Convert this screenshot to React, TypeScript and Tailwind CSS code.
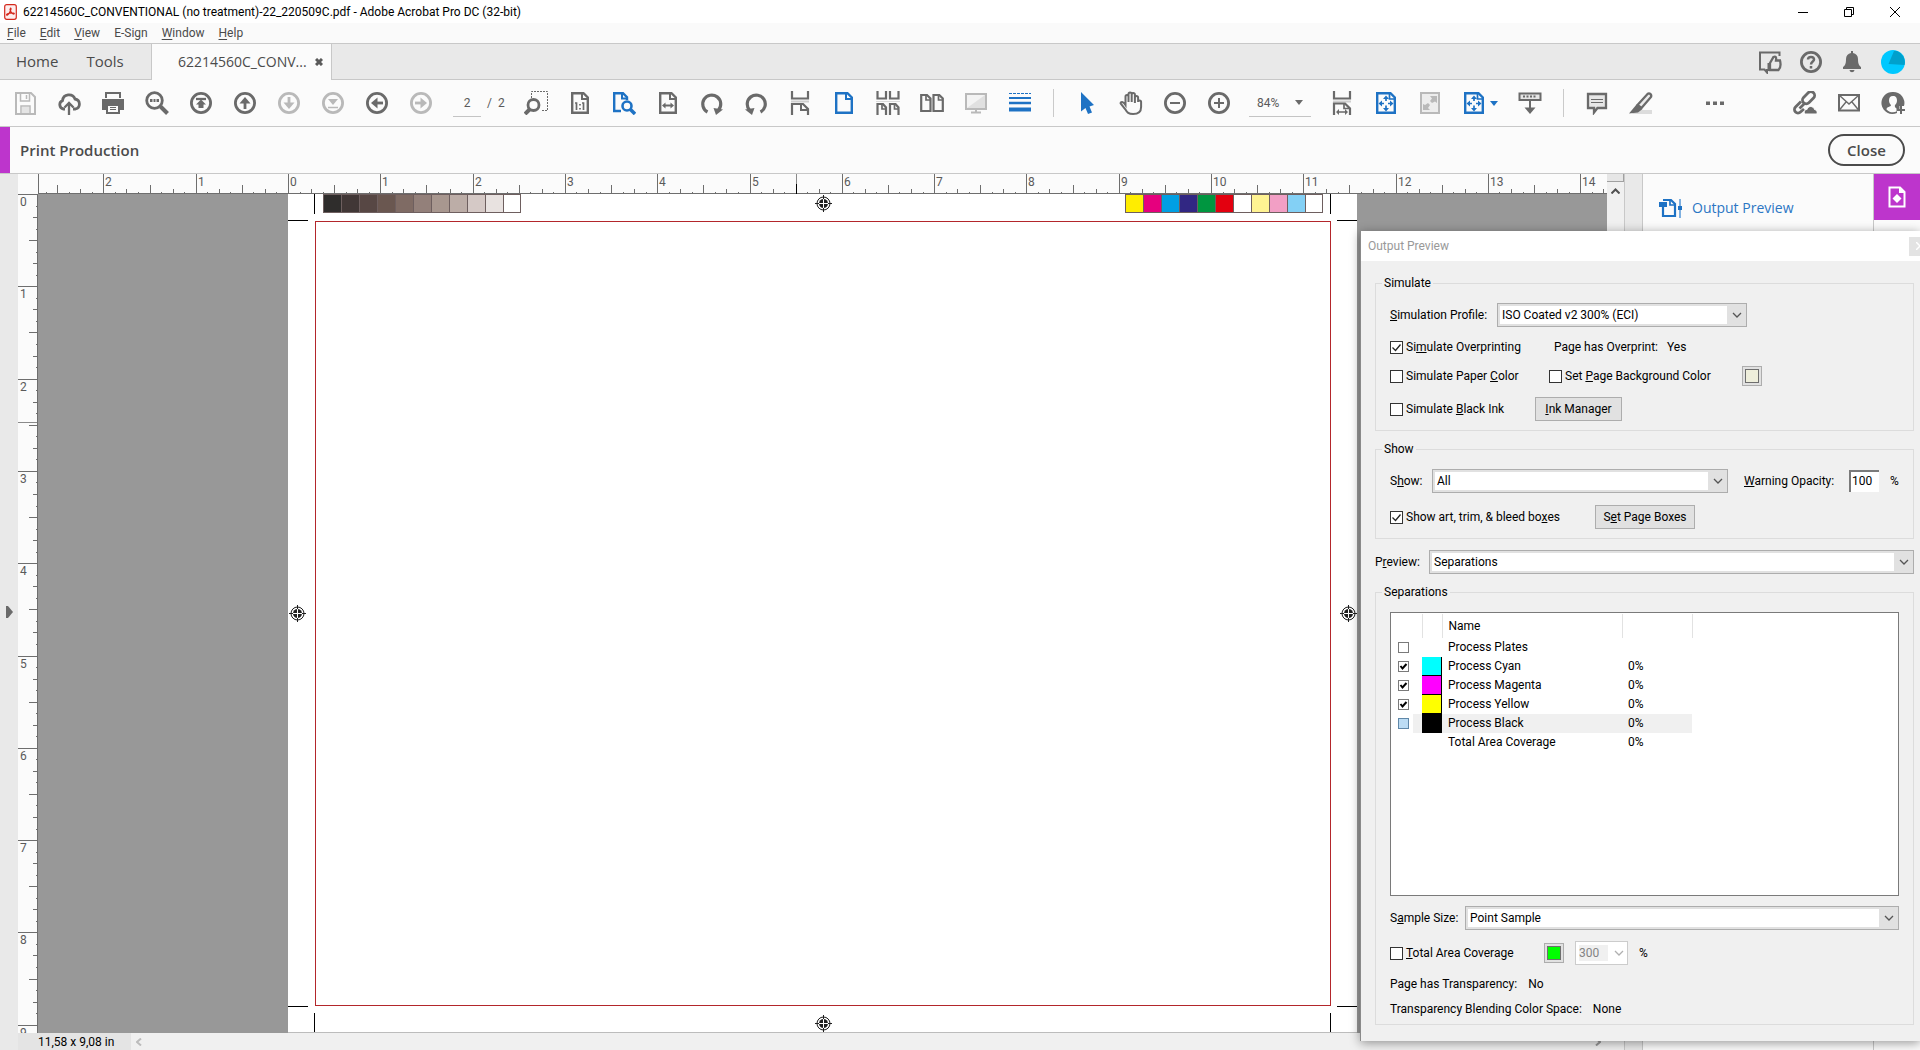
import React from "react";

const GRAY = "#6a6a6a";
const LIGHT = "#b9b9b9";
const BLUE = "#1e72c4";

type IconProps = { color?: string; children: React.ReactNode };

function Icon({ color = GRAY, children }: IconProps) {
  return (
    <svg
      width="24"
      height="24"
      viewBox="0 0 24 24"
      fill="none"
      stroke={color}
      strokeWidth="2"
      className="shrink-0"
      aria-hidden="true"
    >
      {children}
    </svg>
  );
}

const SaveIcon = () => (
  <Icon color={LIGHT}>
    <path d="M3 2h15l4 4v17H3z" />
    <path d="M7.500 3v7h9V3M13.500 4v4M8 22v-7h9v7" strokeWidth="1.500" />
    <path d="M9 16h7v6H9z" fill="#e4e4e4" stroke="none" />
  </Icon>
);

const CloudUpIcon = () => (
  <Icon>
    <path
      d="M8 18H6.500a4.400 4.400 0 0 1-1-8.400A6.500 6.500 0 0 1 18 8a5.100 5.100 0 0 1 .5 10H16"
      strokeWidth="2.800"
    />
    <path d="M12 24V12M7.500 16.500 12 12l4.500 4.500" strokeWidth="2.300" />
  </Icon>
);

const PrintIcon = () => (
  <Icon>
    <path d="M4 1h16v6H4z" fill={GRAY} stroke="none" />
    <path d="M6 3h12v4H6z" fill="#fbfbfb" stroke="none" />
    <path d="M1 8h22v11h-4v-4H5v4H1z" fill={GRAY} stroke="none" />
    <path d="M6 14h12v8H6z" fill="#fbfbfb" />
    <path d="M9 16.500h6M9 18.500h6" strokeWidth="1" />
  </Icon>
);

const SearchIcon = () => (
  <Icon>
    <circle cx="9.500" cy="9.500" r="7.800" strokeWidth="2.800" />
    <path d="m15.500 15.500 7 7" strokeWidth="4" />
    <path d="M5 9.500h2.500M8.500 9.500h2M11.500 9.500H14" strokeWidth="3" />
  </Icon>
);

function CircleIcon({ color = GRAY, children }: IconProps) {
  return (
    <Icon color={color}>
      <circle cx="12" cy="12" r="9.600" strokeWidth="2.800" />
      {children}
    </Icon>
  );
}

const FirstPageIcon = () => (
  <CircleIcon>
    <path d="M7 8h10" strokeWidth="2.300" />
    <path d="m12 8.500 5 5h-2.500V17h-5v-3.500H7z" fill={GRAY} stroke="none" />
  </CircleIcon>
);

const LastPageIcon = () => (
  <CircleIcon color={LIGHT}>
    <path d="M7 16.500h10" strokeWidth="1.500" />
    <path d="m12 14 5-6H7z" fill={LIGHT} stroke="none" />
  </CircleIcon>
);

const arrowTurns = {
  up: "",
  right: "rotate(90 12 12)",
  down: "rotate(180 12 12)",
  left: "rotate(270 12 12)",
};

function ArrowIcon({ to, color = GRAY }: { to: keyof typeof arrowTurns; color?: string }) {
  return (
    <CircleIcon color={color}>
      <g transform={arrowTurns[to]}>
        <path d="M12 18V9" strokeWidth="2.800" />
        <path d="m12 6 5.500 6.500h-11z" fill={color} stroke="none" />
      </g>
    </CircleIcon>
  );
}

const MarqueeZoomIcon = () => (
  <Icon>
    <path d="M7.500 7V.5h16v19H17" strokeWidth="1" strokeDasharray="2 1" />
    <circle cx="9.500" cy="14" r="5.500" strokeWidth="2.800" />
    <path d="m6 18-5 5" strokeWidth="4" />
  </Icon>
);

function PageIcon({ color = GRAY, children }: { color?: string; children?: React.ReactNode }) {
  return (
    <Icon color={color}>
      <path d="M4.200 2.200h11.300L19.800 6.500v15.300H4.200z" strokeWidth="2.400" />
      <path d="M14 2v6h6" />
      {children}
    </Icon>
  );
}

const ActualSizeIcon = () => (
  <PageIcon>
    <path d="M7 12h1.500v7M14 12h1.500v7M12 13v1.500M12 17v1.500" strokeWidth="1.700" />
  </PageIcon>
);

const PageSearchIcon = () => (
  <Icon color={BLUE}>
    <path d="M9 20H2.200V2.200H11l4 4V9" strokeWidth="2.400" />
    <path d="M10 2v5.500h5" />
    <circle cx="15" cy="15" r="4.500" strokeWidth="2.600" />
    <path d="m18.500 18.500 4.500 4.500" strokeWidth="3.500" />
  </Icon>
);

const FitWidthIcon = () => (
  <PageIcon>
    <path d="M8 14.500h8" />
    <path d="m6 14.500 3.500-3v6zM18 14.500l-3.500-3v6z" fill={GRAY} stroke="none" />
  </PageIcon>
);

function RotateIcon({ flip = false }: { flip?: boolean }) {
  return (
    <Icon>
      <g transform={flip ? "translate(24 0) scale(-1 1)" : undefined}>
        <path d="M7.500 21a9 9 0 1 1 11-2" strokeWidth="3.200" />
        <path d="M13.500 17 23 18.500 16 24z" fill={GRAY} stroke="none" />
      </g>
    </Icon>
  );
}

const ScrollPageIcon = () => (
  <Icon>
    <path d="M4 0v7.500h16V0" strokeWidth="2.200" />
    <path d="M3 10.500h18" stroke="#cfcfcf" />
    <path d="M4 24V13h11l5 5v6" strokeWidth="2.200" />
    <path d="M13 13v6h7" />
  </Icon>
);

const FitScrollIcon = () => (
  <Icon>
    <path d="M4 0v7.500h16V0" strokeWidth="2.200" />
    <path d="M3 10.500h18" stroke="#cfcfcf" />
    <path d="M4 24V12.500h11l5 5V24" strokeWidth="2.200" />
    <path d="M14 12.500v5h6M8 21h8" strokeWidth="1.700" />
    <path d="m6 21 3-3v6zM18 21l-3-3v6z" fill={GRAY} stroke="none" />
  </Icon>
);

const FourUpIcon = () => (
  <Icon>
    <path d="M1.500 0v7.500h8.500V0M14 0v7.500h8.500V0" strokeWidth="2.200" />
    <path d="M0 10.500h24" stroke="#dadada" strokeWidth="1" />
    <path d="M1.500 24V13H7l3 3.500V24M14 24V13h5.500l3 3.500V24" strokeWidth="2.200" />
    <path d="M6 13v5h4M18.500 13v5h4" strokeWidth="1.700" />
  </Icon>
);

const TwoUpIcon = () => (
  <Icon>
    <path d="M1.200 4H7l3.500 3.500V20H1.200zM13.500 4h5.800l3.500 3.500V20h-9.300z" strokeWidth="2.200" />
    <path d="M6 4v5h4.500M18.500 4v5h4" strokeWidth="1.700" />
  </Icon>
);

const MonitorIcon = () => (
  <Icon color={LIGHT}>
    <path d="M2 3h20v15H2z" fill="#f3f3f3" />
    <path d="M3 17 21 4v13z" fill="#e0e0e0" stroke="none" />
    <path d="M12 18v3M7 21.500h10" />
  </Icon>
);

const LinesIcon = () => (
  <Icon color={BLUE}>
    <path d="M1 2.500h22" strokeWidth="1" strokeDasharray="3 1" />
    <path d="M1 7h22" />
    <path d="M1 12h22" strokeWidth="2.500" />
    <path d="M1 18.500h22" strokeWidth="4" />
  </Icon>
);

const CursorIcon = () => (
  <Icon color={BLUE}>
    <path
      d="M6 1v19.500l4.500-3.500 2.500 6 4-1.500-2.500-6 4.500-1.500z"
      fill={BLUE}
      stroke="none"
    />
  </Icon>
);

const HandIcon = () => (
  <Icon>
    <path
      d="M6.500 14V5.500a1.500 1.500 0 0 1 3 0V11 3a1.500 1.500 0 0 1 3.200 0v8V3.500a1.500 1.500 0 0 1 3.200 0V12 6.500a1.500 1.500 0 0 1 3.200 0V11a1.500 1.500 0 0 1 3 0v5c0 4.500-3 7-8 7-4.500 0-6-1.500-8-5l-4.500-5.500c0-2 2.500-2.500 4.900 1.500z"
      strokeWidth="2"
    />
  </Icon>
);

const MinusIcon = () => (
  <CircleIcon>
    <path d="M7 12h10" />
  </CircleIcon>
);

const PlusIcon = () => (
  <CircleIcon>
    <path d="M7 12h10M12 7v10" />
  </CircleIcon>
);

const FitPageIcon = () => (
  <Icon color={BLUE}>
    <path d="M3.200 2.200h13.300l4.300 4.300v15.300H3.200z" strokeWidth="2.400" />
    <path d="M15.500 2v6H21" strokeWidth="1.700" />
    <path d="M12 7v3M12 14.500v4M6.500 12.500H10M14 12.500h3.500" strokeWidth="1.700" />
    <path
      d="m12 4.500 3 3.500H9zM12 20.500l3-3.500H9zM4.500 12.500 8 9.500v6zM19.500 12.500l-3.500-3v6z"
      fill={BLUE}
      stroke="none"
    />
  </Icon>
);

const FullScreenIcon = () => (
  <Icon color={LIGHT}>
    <path d="M3 2h18v20H3z" fill="#ededed" />
    <path
      d="M12 5h7v7l-2-1.500-3 1.500-2-2 2-2.500zM12 19H5v-6l2 1 3-2 2 2-2 3z"
      fill={LIGHT}
      stroke="none"
    />
  </Icon>
);

const MeasureIcon = () => (
  <Icon>
    <path d="M1.500 2.500h21V9h-21z" fill="#e6e6e6" />
    <path d="M5 5.500h14" strokeDasharray="2 1.500" />
    <path d="M12 9v9" />
    <path d="M6.500 16.500h11L12 23z" fill={GRAY} stroke="none" />
  </Icon>
);

const CommentIcon = () => (
  <Icon>
    <path d="M3 3h18v14h-8.500L9 21.500V17H3z" fill="#e6e6e6" strokeWidth="2.300" />
    <path d="M6 8.500h12M6 11.500h12" strokeWidth="1.200" />
  </Icon>
);

const HighlighterIcon = () => (
  <Icon>
    <path d="M7 19h16v4H3z" fill="#dcdcdc" stroke="none" />
    <path d="M8.500 14 18.500 3c2-1.500 4.500.5 3.500 3L12.500 17z" fill="#ececec" strokeWidth="2.300" />
    <path d="M7.500 13.500 13.500 18 9 21.500 0 22.500z" fill={GRAY} stroke="none" />
  </Icon>
);

const DotsIcon = () => (
  <Icon>
    <path d="M3 10.500h4v3.500H3zM10 10.500h4v3.500h-4zM17 10.500h4v3.500h-4z" fill={GRAY} stroke="none" />
  </Icon>
);

const LinkCloudIcon = () => (
  <Icon>
    <g strokeWidth="2.800">
      <rect x="8.500" y="3" width="14" height="7.500" rx="3.700" transform="rotate(-45 15.500 6.700)" />
      <path d="M8 10.500 2.500 16a3.500 3.500 0 0 0 5 5l3.500-3M6.500 17.500l5.500-5.500" />
    </g>
    <path
      d="M11.500 23c-1-3.500 1-4.500 2.500-4.500 1-4 6.500-4 7.500 0 2.500 0 3 3 2.500 4.500z"
      fill={GRAY}
      stroke="#fbfbfb"
      strokeWidth="1"
    />
  </Icon>
);

const MailIcon = () => (
  <Icon>
    <path d="M2 4h20v15.500H2z" />
    <path d="m2 4 10 9L22 4M2 19.500 9 11M22 19.500 15 11" strokeWidth="1.400" />
  </Icon>
);

const UserPlusIcon = () => (
  <Icon>
    <path
      d="M12 1a11 11 0 1 0 4 21v-3.500h2.500V15H23A11 11 0 0 0 12 1z"
      fill={GRAY}
      stroke="none"
    />
    <path
      d="M12 5c-3 0-4 2-4 4.500s1 3.500 2 4.500c0 2-4.500 1.500-4.500 4.500 3 3 7 3.500 10 2v-3c-1.500-1-2-2-1.500-3.500 1-1 2-2 2-4.500S15 5 12 5z"
      fill="#fbfbfb"
      stroke="none"
    />
    <path d="M20 15v8M16 19h8" />
  </Icon>
);

const FeedbackIcon = () => (
  <Icon>
    <path d="M9 19v3.500l-2.500-3H2v-17h19.500V6" />
    <path d="M12 13 15.500 7c2-1 3 0 2.500 3.500H22c1 4 0 8-1.500 9.500H12z" fill="#eaeaea" strokeWidth="2.300" />
    <path d="M9.500 13h3v8h-3z" fill={GRAY} stroke="none" />
  </Icon>
);

const HelpIcon = () => (
  <CircleIcon>
    <path d="M9 9.500C9 6 15 6 15 9.500c0 2-3 2-3 5M12 16v2.500" strokeWidth="2.500" />
  </CircleIcon>
);

const BellIcon = () => (
  <Icon>
    <path
      d="M11 1h2v2c3 .5 5 2.500 5 6 0 5 1 6.500 3 8v2H3v-2c2-1.500 3-3 3-8 0-3.500 2-5.500 5-6zM9.500 20h5c-.5 3-4.500 3-5 0z"
      fill={GRAY}
      stroke="none"
    />
  </Icon>
);

const AcrobatIcon = () => (
  <svg width="13" height="16" viewBox="0 0 13 16" fill="none" stroke="#d4281c" aria-hidden="true">
    <rect x=".7" y=".7" width="11.600" height="14.600" rx="2" fill="#fdeeee" strokeWidth="1.200" />
    <path
      d="M6.500 4c1.500 0-.5 5-3 7-1 .8-1.500-.5 0-1.200C5.500 9 8 8.600 9.500 9c1.500.5.500 1.500-.7.800C7.500 9 5 6 6.500 4z"
      strokeWidth="1.200"
    />
  </svg>
);

const OutputPreviewIcon = () => (
  <svg width="24" height="20" viewBox="0 0 24 20" fill="none" stroke={BLUE} aria-hidden="true">
    <path d="M4 9v9h12V6l-4-4H4" strokeWidth="2.200" />
    <path d="M11 2v5h5" strokeWidth="1.700" />
    <path d="M0 4h8v5H0z" fill={BLUE} stroke="none" />
    <path d="M21 1v19" stroke="#7fb0e0" strokeWidth="2" />
    <path d="M19 8h4v4h-4z" fill={BLUE} stroke="none" />
  </svg>
);

const PrintToolIcon = () => (
  <svg width="18" height="22" viewBox="0 0 18 22" fill="none" stroke="#fff" aria-hidden="true">
    <path d="M1.500 1.500h10.500l4.500 4.500v14.500h-15z" strokeWidth="2" />
    <path d="M11 1v6h6z" fill="#fff" stroke="none" />
    <path d="m9 8 4.500 4.500L9 17l-4.500-4.500z" fill="#fff" stroke="none" />
  </svg>
);

const Caret = ({ color }: { color: string }) => (
  <svg width="8" height="5" viewBox="0 0 8 5" aria-hidden="true">
    <path d="M0 0h8L4 5z" fill={color} />
  </svg>
);

function ToolButton({ label, children }: { label: string; children: React.ReactNode }) {
  return (
    <button
      type="button"
      aria-label={label}
      className="flex h-8 w-11 shrink-0 items-center justify-center"
    >
      {children}
    </button>
  );
}

function TitleBar() {
  return (
    <header className="flex h-[23px] shrink-0 items-center bg-white pl-1">
      <AcrobatIcon />
      <h1 className="ml-1.5 text-xs text-black">
        62214560C_CONVENTIONAL (no treatment)-22_220509C.pdf - Adobe Acrobat Pro DC (32-bit)
      </h1>
      <div className="ml-auto flex pr-0.5">
        <button type="button" aria-label="Minimize" className="flex w-[46px] justify-center">
          <svg width="10" height="10" stroke="#000">
            <path d="M0 5.500h10" />
          </svg>
        </button>
        <button type="button" aria-label="Restore" className="flex w-[46px] justify-center">
          <svg width="10" height="10" fill="none" stroke="#000">
            <path d="M.5 2.500h7v7h-7zM2.500 2.500v-2h7v7h-2" />
          </svg>
        </button>
        <button type="button" aria-label="Close window" className="flex w-[46px] justify-center">
          <svg width="10" height="10" stroke="#000">
            <path d="m0 0 10 10M10 0 0 10" />
          </svg>
        </button>
      </div>
    </header>
  );
}

const menus = [
  ["F", "ile"],
  ["E", "dit"],
  ["V", "iew"],
  ["", "E-Sign"],
  ["W", "indow"],
  ["H", "elp"],
];

function MenuBar() {
  return (
    <nav className="flex h-[21px] shrink-0 items-center gap-3.5 border-b border-[#c8c8c8] bg-[#fafafa] pl-[7px] text-xs text-[#4a4a4a]">
      {menus.map(([key, rest]) => (
        <button type="button" key={rest}>
          <u className="underline-offset-2">{key}</u>
          {rest}
        </button>
      ))}
    </nav>
  );
}

function TabBar() {
  return (
    <div className="flex h-9 shrink-0 bg-[#e9e9e9] font-['Open_Sans','Noto_Sans',sans-serif] text-[15px] text-[#4b4b4b]">
      <div className="flex w-[152px] gap-7 border-r border-b border-[#c8c8c8] pl-4">
        <button type="button">Home</button>
        <button type="button">Tools</button>
      </div>
      <div className="flex w-[179px] items-center gap-2 bg-[#fbfbfb] pl-[26px]">
        <span className="text-sm">62214560C_CONV...</span>
        <button type="button" aria-label="Close tab">
          <svg width="8" height="8" stroke="#5a5a5a" strokeWidth="3">
            <path d="m1 1 6 6M7 1 1 7" />
          </svg>
        </button>
      </div>
      <div className="flex flex-1 items-center justify-end gap-[17px] border-b border-l border-[#c8c8c8] pr-[15px]">
        <button type="button" aria-label="Feedback">
          <FeedbackIcon />
        </button>
        <button type="button" aria-label="Help">
          <HelpIcon />
        </button>
        <button type="button" aria-label="Notifications">
          <BellIcon />
        </button>
        <button type="button" aria-label="Account">
          <svg width="24" height="24">
            <circle cx="12" cy="12" r="12" fill="#00c8ff" />
            <path d="M13 1 7.500 14l16 1A12 12 0 0 0 16 1z" fill="#00a0cc" />
          </svg>
        </button>
      </div>
    </div>
  );
}

const Divider = () => <div className="mx-[11px] h-7 w-px shrink-0 bg-[#cacaca]" />;

function Toolbar() {
  return (
    <div className="flex h-[47px] shrink-0 items-center border-b border-[#c8c8c8] bg-[#fbfbfb] pl-[3px] text-xs text-[#5a5a5a]">
      <ToolButton label="Save"><SaveIcon /></ToolButton>
      <ToolButton label="Upload"><CloudUpIcon /></ToolButton>
      <ToolButton label="Print"><PrintIcon /></ToolButton>
      <ToolButton label="Find"><SearchIcon /></ToolButton>
      <ToolButton label="First page"><FirstPageIcon /></ToolButton>
      <ToolButton label="Previous page"><ArrowIcon to="up" /></ToolButton>
      <ToolButton label="Next page"><ArrowIcon to="down" color={LIGHT} /></ToolButton>
      <ToolButton label="Last page"><LastPageIcon /></ToolButton>
      <ToolButton label="Previous view"><ArrowIcon to="left" /></ToolButton>
      <ToolButton label="Next view"><ArrowIcon to="right" color={LIGHT} /></ToolButton>
      <div className="flex w-[71px] shrink-0 items-center pl-2.5">
        <input
          aria-label="Page number"
          defaultValue="2"
          className="h-[27px] w-7 border-b border-[#c4c4c4] text-center outline-none"
        />
        <span className="ml-1.5">/&nbsp;&nbsp;2</span>
      </div>
      <ToolButton label="Marquee zoom"><MarqueeZoomIcon /></ToolButton>
      <ToolButton label="Actual size"><ActualSizeIcon /></ToolButton>
      <ToolButton label="Zoom to page"><PageSearchIcon /></ToolButton>
      <ToolButton label="Fit width"><FitWidthIcon /></ToolButton>
      <ToolButton label="Rotate clockwise"><RotateIcon /></ToolButton>
      <ToolButton label="Rotate counterclockwise"><RotateIcon flip /></ToolButton>
      <ToolButton label="Scrolling"><ScrollPageIcon /></ToolButton>
      <ToolButton label="Single page"><PageIcon color={BLUE} /></ToolButton>
      <ToolButton label="Two page scrolling"><FourUpIcon /></ToolButton>
      <ToolButton label="Two page view"><TwoUpIcon /></ToolButton>
      <ToolButton label="Full screen"><MonitorIcon /></ToolButton>
      <ToolButton label="Line weights"><LinesIcon /></ToolButton>
      <Divider />
      <ToolButton label="Select"><CursorIcon /></ToolButton>
      <ToolButton label="Pan"><HandIcon /></ToolButton>
      <ToolButton label="Zoom out"><MinusIcon /></ToolButton>
      <ToolButton label="Zoom in"><PlusIcon /></ToolButton>
      <div className="mr-[9px] ml-2 flex h-[27px] w-[62px] shrink-0 items-center border-b border-[#c4c4c4]">
        <select aria-label="Zoom level" className="flex-1 appearance-none pl-2 outline-none">
          <option>84%</option>
        </select>
        <span className="mr-2"><Caret color={GRAY} /></span>
      </div>
      <ToolButton label="Fit width scrolling"><FitScrollIcon /></ToolButton>
      <ToolButton label="Fit page"><FitPageIcon /></ToolButton>
      <ToolButton label="Read mode"><FullScreenIcon /></ToolButton>
      <button
        type="button"
        aria-label="Page fit options"
        className="flex h-8 w-[56px] shrink-0 items-center gap-1 pl-2.5"
      >
        <FitPageIcon />
        <Caret color={BLUE} />
      </button>
      <ToolButton label="Measure"><MeasureIcon /></ToolButton>
      <Divider />
      <ToolButton label="Comment"><CommentIcon /></ToolButton>
      <ToolButton label="Highlight"><HighlighterIcon /></ToolButton>
      <div className="ml-[30px]">
        <ToolButton label="More tools"><DotsIcon /></ToolButton>
      </div>
      <div className="ml-auto flex pr-[5px]">
        <ToolButton label="Share link"><LinkCloudIcon /></ToolButton>
        <ToolButton label="Send by email"><MailIcon /></ToolButton>
        <ToolButton label="Add people"><UserPlusIcon /></ToolButton>
      </div>
    </div>
  );
}

function ToolHeader() {
  return (
    <div className="flex h-[47px] shrink-0 items-center border-b border-[#c8c8c8] bg-[#fbfbfb] pr-[15px] font-['Open_Sans','Noto_Sans',sans-serif] text-[15px] font-semibold text-[#4b4b4b]">
      <div className="h-full w-2.5 bg-[#bd35cc]" />
      <h2 className="ml-2.5">Print Production</h2>
      <button type="button" className="ml-auto h-8 w-[77px] rounded-full border-2 border-[#4b4b4b]">
        Close
      </button>
    </div>
  );
}

// 84% zoom: one inch of the document in screen pixels
const INCH = 92.3;

function tickLength(eighth: number) {
  if (eighth % 8 === 0) return 20;
  if (eighth % 4 === 0) return 9;
  if (eighth % 2 === 0) return 5;
  return 2;
}

const range = (from: number, to: number) =>
  Array.from({ length: to - from + 1 }, (_, i) => from + i);

function HorizontalRuler() {
  return (
    <svg className="h-5 w-full bg-[#fbfbfb]" stroke="#6e6e6e" aria-hidden="true">
      <path d="M.5 0v20M0 19.500h3000" />
      {range(-21, 119).map((n) => {
        const x = Math.round(250 + (n * INCH) / 8) + 0.5;
        return (
          <g key={n}>
            <path d={`M${x} 20v-${tickLength(n)}`} />
            {n % 8 === 0 && (
              <text x={x + 1.5} y="12" fontSize="12" fill="#5a5a5a" stroke="none">
                {Math.abs(n / 8)}
              </text>
            )}
          </g>
        );
      })}
      <path d="M758.500 0v10" stroke="#8a8a8a" />
      <path d="M758.500 10v10" stroke="#000" />
    </svg>
  );
}

function VerticalRuler() {
  return (
    <svg className="h-full w-5 shrink-0 bg-[#fbfbfb]" stroke="#6e6e6e" aria-hidden="true">
      <path d="M19.500 0v3000" />
      {range(0, 79).map((n) => {
        const y = Math.round((n * INCH) / 8) + 0.5;
        return (
          <g key={n}>
            <path d={`M20 ${y}h-${tickLength(n)}`} />
            {n % 8 === 0 && (
              <text x="2" y={y + 11} fontSize="12" fill="#5a5a5a" stroke="none">
                {n / 8}
              </text>
            )}
          </g>
        );
      })}
      <path d="M0 228.500h19" stroke="#8a8a8a" />
    </svg>
  );
}

function RegistrationMark({ className }: { className: string }) {
  return (
    <svg
      width="17"
      height="17"
      fill="none"
      stroke="#1f1f1f"
      className={`absolute ${className}`}
      aria-hidden="true"
    >
      <circle cx="8.500" cy="8.500" r="6.500" />
      <path d="M8.500 0v17M0 8.500h17" />
      <circle cx="8.500" cy="8.500" r="4.500" fill="#1f1f1f" stroke="none" />
      <path d="M8.500 4v9M4 8.500h9" stroke="#fff" />
    </svg>
  );
}

const grayBar = [
  "bg-[#2f2d2c]", "bg-[#413736]", "bg-[#574744]", "bg-[#6a5750]", "bg-[#7f6b64]", "bg-[#93807a]",
  "bg-[#a8978f]", "bg-[#bcada7]", "bg-[#d5c9c6]", "bg-[#e8e2e0]", "bg-white",
];

const colorBar = [
  "bg-[#ffed00]", "bg-[#e6007e]", "bg-[#009fe3]", "bg-[#312783]", "bg-[#009640]", "bg-[#e3000f]",
  "bg-white", "bg-[#fff392]", "bg-[#f29fc5]", "bg-[#83d0f5]", "bg-white",
];

function ControlBar({ cells, className }: { cells: string[]; className: string }) {
  return (
    <div className={`absolute top-0 flex border border-[#6e5f5f] ${className}`}>
      {cells.map((cell, i) => (
        <div
          key={i}
          className={`h-[17px] w-[18px] border-r border-[#6e5f5f] last:w-4 last:border-r-0 ${cell}`}
        />
      ))}
    </div>
  );
}

function PagePreview() {
  return (
    <div className="relative ml-[250px] h-full w-[1069px] shrink-0 border-b border-[#bcbcbc] bg-white">
      <ControlBar cells={grayBar} className="left-[35px]" />
      <ControlBar cells={colorBar} className="left-[837px]" />

      {/* crop marks */}
      <div className="absolute top-0 left-[26px] h-5 w-px bg-black" />
      <div className="absolute top-0 right-[26px] h-5 w-px bg-black" />
      <div className="absolute bottom-0 left-[26px] h-[19px] w-px bg-black" />
      <div className="absolute right-[26px] bottom-0 h-[19px] w-px bg-black" />
      <div className="absolute top-[26px] left-0 h-px w-5 bg-black" />
      <div className="absolute top-[26px] right-0 h-px w-5 bg-black" />
      <div className="absolute bottom-[25px] left-0 h-px w-5 bg-black" />
      <div className="absolute right-0 bottom-[25px] h-px w-5 bg-black" />

      {/* trim box */}
      <div className="absolute top-[27px] right-[26px] bottom-[26px] left-[27px] border border-[#b3262b]" />

      <RegistrationMark className="top-px left-[527px]" />
      <RegistrationMark className="bottom-0 left-[527px]" />
      <RegistrationMark className="top-[411px] left-px" />
      <RegistrationMark className="top-[411px] right-0" />
    </div>
  );
}

function DocumentView() {
  return (
    <div className="flex min-w-0 flex-1 flex-col">
      <div className="flex min-h-0 flex-1">
        <div className="flex min-w-0 flex-1 flex-col bg-[#fbfbfb]">
          <div className="h-5 shrink-0 pl-5">
            <HorizontalRuler />
          </div>
          <div className="flex min-h-0 flex-1">
            <VerticalRuler />
            <div className="flex min-w-0 flex-1 overflow-hidden bg-[#989898]">
              <PagePreview />
            </div>
          </div>
        </div>
        <div className="flex w-[17px] shrink-0 flex-col items-center bg-[#f0f0f0]">
          <div className="h-2 w-full border-r border-b border-[#a0a0a0] bg-[#e6e6e6]" />
          <svg width="9" height="6" fill="none" stroke="#505050" strokeWidth="2" className="mt-1.5">
            <path d="m.5 5.500 4-4 4 4" />
          </svg>
        </div>
      </div>
      <div className="flex h-[17px] shrink-0 items-center bg-[#f0f0f0]">
        <div className="flex h-full w-[113px] items-center bg-[#e4e4e4] pl-5 text-xs text-black">
          11,58 x 9,08 in
        </div>
        <svg width="6" height="8" fill="none" stroke="#bcbcbc" strokeWidth="2" className="ml-[5px]">
          <path d="m5 .5-4 3.500 4 3.500" />
        </svg>
        <svg width="6" height="8" fill="none" stroke="#9a9a9a" strokeWidth="2" className="mr-[23px] ml-auto">
          <path d="m1 .5 4 3.500-4 3.500" />
        </svg>
      </div>
    </div>
  );
}

function CheckBox({ checked = false, children }: { checked?: boolean; children: React.ReactNode }) {
  return (
    <label className="flex items-center gap-[3px]">
      <span className="grid">
        <input
          type="checkbox"
          defaultChecked={checked}
          className="peer col-start-1 row-start-1 size-[13px] appearance-none border border-[#333] bg-white"
        />
        <svg
          width="13"
          height="13"
          fill="none"
          stroke="#222"
          strokeWidth="1.300"
          className="pointer-events-none col-start-1 row-start-1 hidden peer-checked:block"
        >
          <path d="m2.500 6.500 3 3 5-6" />
        </svg>
      </span>
      <span>{children}</span>
    </label>
  );
}

function Select({ id, value, className = "" }: { id: string; value: string; className?: string }) {
  return (
    <div className={`flex h-6 items-center border border-[#adadad] bg-[#e1e1e1] p-0.5 ${className}`}>
      <select
        id={id}
        className="h-[18px] min-w-0 flex-1 appearance-none bg-white pl-0.5 leading-[18px] outline-none"
      >
        <option>{value}</option>
      </select>
      <svg
        width="17"
        height="10"
        fill="none"
        stroke="#555"
        strokeWidth="1.300"
        className="pointer-events-none"
      >
        <path d="m6 3 4 4 4-4" />
      </svg>
    </div>
  );
}

function Group({ title, className, children }: { title: string; className: string; children: React.ReactNode }) {
  return (
    <fieldset className={`border border-[#dcdcdc] pl-3.5 ${className}`}>
      <legend className="-ml-2 px-0.5 leading-[18px]">{title}</legend>
      {children}
    </fieldset>
  );
}

function ColorWell({ label, color }: { label: string; color: string }) {
  return (
    <button
      type="button"
      aria-label={label}
      className="flex size-5 items-center justify-center border border-[#adadad] bg-[#e1e1e1]"
    >
      <span className={`size-3.5 border border-[#6e6e6e] ${color}`} />
    </button>
  );
}

type Plate = { name: string; value?: string; swatch?: string; box?: "on" | "off" | "hot" };

const plates: Plate[] = [
  { name: "Process Plates", box: "off" },
  { name: "Process Cyan", value: "0%", swatch: "bg-[#00ffff]", box: "on" },
  { name: "Process Magenta", value: "0%", swatch: "bg-[#ff00ff]", box: "on" },
  { name: "Process Yellow", value: "0%", swatch: "bg-[#ffff00]", box: "on" },
  { name: "Process Black", value: "0%", swatch: "bg-black", box: "hot" },
  { name: "Total Area Coverage", value: "0%" },
];

function PlateTable() {
  return (
    <div className="mr-3.5 h-[284px] border border-[#7a7a7a] bg-white pt-px">
      <table className="table-fixed border-collapse">
        <colgroup>
          <col className="w-[22px]" />
          <col className="w-[9px]" />
          <col className="w-5" />
          <col className="w-[180px]" />
          <col className="w-[70px]" />
        </colgroup>
        <thead>
          <tr className="h-6 text-left">
            <th colSpan={2} aria-label="Visible" className="border-r border-[#e2e2e2]" />
            <th aria-label="Color" className="border-r border-[#e2e2e2]" />
            <th className="border-r border-[#e2e2e2] pl-1.5 font-normal">Name</th>
            <th aria-label="Coverage" className="border-r border-[#e2e2e2]" />
          </tr>
        </thead>
        <tbody>
          {plates.map(({ name, value, swatch, box }) => {
            const rowBg = box === "hot" ? "bg-[#f0f0f0]" : "";
            return (
              <tr key={name} className="h-[19px] leading-[19px]">
                <td className="p-0">
                  {box && (
                    <span className="ml-[7px] grid w-[11px]">
                      <input
                        type="checkbox"
                        aria-label={name}
                        defaultChecked={box === "on"}
                        className={`peer col-start-1 row-start-1 size-[11px] appearance-none border ${
                          box === "hot" ? "border-[#5f87a8] bg-[#bcdcf4]" : "border-[#7a7a7a] bg-white"
                        }`}
                      />
                      <svg
                        width="11"
                        height="11"
                        fill="none"
                        stroke="#000"
                        strokeWidth="2"
                        className="pointer-events-none col-start-1 row-start-1 hidden peer-checked:block"
                      >
                        <path d="m2.500 5 2 2.500 4-4.500" />
                      </svg>
                    </span>
                  )}
                </td>
                <td className={`p-0 ${rowBg}`} />
                <td className="p-0">
                  {swatch && <div className={`h-[19px] border-r border-b border-black ${swatch}`} />}
                </td>
                <td className={`p-0 pl-1.5 ${rowBg}`}>{name}</td>
                <td className={`p-0 pl-1.5 ${rowBg}`}>{value}</td>
              </tr>
            );
          })}
        </tbody>
      </table>
    </div>
  );
}

function OutputPreviewDialog() {
  return (
    <section
      role="dialog"
      aria-labelledby="dialog-title"
      className="absolute top-[231px] right-0 w-[560px] border-l border-[#8a8a8a] bg-[#f0f0f0] text-xs text-black shadow-[0_2px_10px_rgba(0,0,0,0.4)]"
    >
      <div className="flex h-[30px] items-center justify-between bg-white pl-[7px]">
        <h2 id="dialog-title" className="text-[#999]">Output Preview</h2>
        <button
          type="button"
          aria-label="Close Output Preview"
          className="h-[19px] w-[11px] overflow-hidden bg-[#e3e3e3] pl-[7px]"
        >
          <svg width="8" height="8" stroke="#fff" strokeWidth="1.500">
            <path d="m0 0 8 8M8 0 0 8" />
          </svg>
        </button>
      </div>
      <div className="pt-[13px] pr-1.5 pb-4 pl-[14px]">
        <Group title="Simulate" className="pt-[11px] pb-[9px]">
          <div className="flex h-6 items-center">
            <label htmlFor="profile" className="w-[107px]"><u>S</u>imulation Profile:</label>
            <Select id="profile" value="ISO Coated v2 300% (ECI)" className="w-[250px]" />
          </div>
          <div className="mt-2.5 flex h-5 items-center">
            <div className="w-[164px]">
              <CheckBox checked>Si<u>m</u>ulate Overprinting</CheckBox>
            </div>
            <span className="w-[113px]">Page has Overprint:</span>
            <span>Yes</span>
          </div>
          <div className="mt-[9px] flex h-5 items-center">
            <div className="w-[159px]">
              <CheckBox>Simulate Paper <u>C</u>olor</CheckBox>
            </div>
            <div className="w-[193px]">
              <CheckBox>Set <u>P</u>age Background Color</CheckBox>
            </div>
            <ColorWell label="Page background color" color="bg-[#eeeedb]" />
          </div>
          <div className="mt-[11px] flex h-6 items-center">
            <div className="w-[145px]">
              <CheckBox>Simulate <u>B</u>lack Ink</CheckBox>
            </div>
            <button type="button" className="h-6 w-[87px] border border-[#adadad] bg-[#e1e1e1]">
              <u>I</u>nk Manager
            </button>
          </div>
        </Group>

        <Group title="Show" className="mt-[9px] pt-[11px] pb-[9px]">
          <div className="flex h-6 items-center">
            <label htmlFor="show" className="w-[42px]">S<u>h</u>ow:</label>
            <Select id="show" value="All" className="w-[296px]" />
            <label htmlFor="opacity" className="ml-4 w-[105px]"><u>W</u>arning Opacity:</label>
            <input
              id="opacity"
              defaultValue="100"
              className="h-[22px] w-[30px] border-t-2 border-l-2 border-[#7a7a7a] bg-white pb-0.5 pl-px outline-none"
            />
            <span className="ml-[11px]">%</span>
          </div>
          <div className="mt-3 flex h-6 items-center">
            <div className="w-[205px]">
              <CheckBox checked>Show art, trim, &amp; bleed bo<u>x</u>es</CheckBox>
            </div>
            <button type="button" className="h-6 w-[100px] border border-[#adadad] bg-[#e1e1e1]">
              S<u>e</u>t Page Boxes
            </button>
          </div>
        </Group>

        <div className="mt-[11px] flex h-6 items-center">
          <label htmlFor="preview" className="w-[54px]">P<u>r</u>eview:</label>
          <Select id="preview" value="Separations" className="flex-1" />
        </div>

        <Group title="Separations" className="mt-[9px] pt-[11px] pb-1.5">
          <PlateTable />
          <div className="mt-2.5 mr-3.5 flex h-6 items-center">
            <label htmlFor="sample" className="w-[75px]">S<u>a</u>mple Size:</label>
            <Select id="sample" value="Point Sample" className="flex-1" />
          </div>
          <div className="mt-[11px] flex h-6 items-center">
            <div className="w-[154px]">
              <CheckBox><u>T</u>otal Area Coverage</CheckBox>
            </div>
            <ColorWell label="Coverage highlight color" color="bg-[#00ff00]" />
            <div className="ml-[11px] flex h-6 w-[53px] items-center border border-[#cccccc] bg-white pl-[3px] text-[#838383]">
              <select
                disabled
                aria-label="Coverage limit"
                className="h-4 w-[29px] appearance-none bg-[#f0f0f0] leading-4"
              >
                <option>300</option>
              </select>
              <svg width="17" height="10" fill="none" stroke="#b0b0b0" strokeWidth="1.300">
                <path d="m7 3 4 4 4-4" />
              </svg>
            </div>
            <span className="ml-[11px]">%</span>
          </div>
          <p className="mt-2.5 leading-[18px]">
            Page has Transparency:<span className="ml-[11px]">No</span>
          </p>
          <p className="mt-[7px] leading-[18px]">
            Transparency Blending Color Space:<span className="ml-[11px]">None</span>
          </p>
        </Group>
      </div>
    </section>
  );
}

export default function App() {
  return (
    <div className="relative flex h-screen flex-col overflow-hidden bg-[#fbfbfb] font-[Roboto,'Open_Sans',sans-serif]">
      <TitleBar />
      <MenuBar />
      <TabBar />
      <Toolbar />
      <ToolHeader />
      <main className="flex min-h-0 flex-1">
        <button
          type="button"
          aria-label="Open navigation pane"
          className="flex w-[18px] shrink-0 items-center justify-center bg-[#e9e9e9]"
        >
          <svg width="7" height="12" aria-hidden="true">
            <path d="M0 0h2l5 6-5 6H0z" fill={GRAY} />
          </svg>
        </button>
        <DocumentView />
        <div className="w-[19px] shrink-0 border-x border-[#c8c8c8] bg-[#e9e9e9]" />
        <aside className="w-[231px] shrink-0 border-r border-[#c8c8c8] bg-[#fbfbfb] pt-6 pl-4">
          <a
            href="#output-preview"
            className="flex items-center gap-[9px] font-['Open_Sans','Noto_Sans',sans-serif] text-sm text-[#2b76c4]"
          >
            <OutputPreviewIcon />
            Output Preview
          </a>
        </aside>
        <div className="w-[46px] shrink-0">
          <button
            type="button"
            aria-label="Print Production tools"
            className="flex h-[46px] w-full items-center justify-center bg-[#bd35cc]"
          >
            <PrintToolIcon />
          </button>
        </div>
      </main>
      <OutputPreviewDialog />
    </div>
  );
}
